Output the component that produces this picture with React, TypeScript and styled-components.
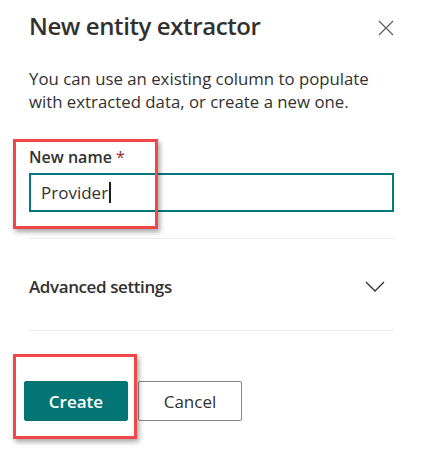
import React from "react";
import styled, { createGlobalStyle } from "styled-components";

const GlobalStyle = createGlobalStyle`
  body {
    margin: 0;
    background: #ffffff;
    font-family: "Open Sans", "Noto Sans", sans-serif;
    color: #323130;
  }
`;

const App: React.FC = () => {
  return (
    <>
      <GlobalStyle />
      <Panel>
        <Header>
          <Title>New entity extractor</Title>
          <CloseButton aria-label="Close">
            <svg width="16" height="16" viewBox="0 0 16 16">
              <path d="M1 1 L15 15 M15 1 L1 15" stroke="#605e5c" strokeWidth="1.2" fill="none" />
            </svg>
          </CloseButton>
        </Header>

        <Description>
          You can use an existing column to populate with extracted data, or create a new one.
        </Description>

        <Field>
          <Highlight $top={-7} $left={-16} $width={145} $height={90} />
          <Label>
            New name <Required>*</Required>
          </Label>
          <Input>
            Provider<Caret />
          </Input>
        </Field>

        <Divider />

        <Collapsible>
          <SectionTitle>Advanced settings</SectionTitle>
          <svg width="20" height="11" viewBox="0 0 20 11">
            <path d="M1 1 L10 10 L19 1" stroke="#323130" strokeWidth="1.3" fill="none" />
          </svg>
        </Collapsible>

        <Divider />

        <Footer>
          <Highlight $top={-27} $left={-11} $width={124} $height={85} />
          <Button $primary>Create</Button>
          <Button>Cancel</Button>
        </Footer>
      </Panel>
    </>
  );
};

export default App;

const Panel = styled.div`
  width: 421px;
  height: 460px;
  box-sizing: border-box;
  padding: 10px 27px 0 29px;
  background: #ffffff;
`;

const Header = styled.div`
  display: flex;
  justify-content: space-between;
  align-items: flex-start;
`;

const Title = styled.h1`
  margin: 0;
  font-size: 24px;
  line-height: 32px;
  font-weight: 600;
  letter-spacing: -0.4px;
  color: #323130;
`;

const CloseButton = styled.button`
  border: none;
  background: transparent;
  padding: 0;
  margin: 10px 0 0 0;
  width: 16px;
  height: 16px;
  display: flex;
`;

const Description = styled.p`
  margin: 25px 0 0 0;
  font-size: 16.8px;
  line-height: 23px;
  color: #323130;
`;

const Field = styled.div`
  position: relative;
  margin-top: 33px;
  padding-bottom: 26px;
`;

const Highlight = styled.div<{ $top: number; $left: number; $width: number; $height: number }>`
  position: absolute;
  top: ${(p) => p.$top}px;
  left: ${(p) => p.$left}px;
  width: ${(p) => p.$width}px;
  height: ${(p) => p.$height}px;
  box-sizing: border-box;
  border: 3px solid #f04848;
  box-shadow: 2px 3px 5px rgba(0, 0, 0, 0.35);
  pointer-events: none;
  z-index: 2;
`;

const Label = styled.div`
  font-size: 16px;
  line-height: 22px;
  font-weight: 600;
  color: #323130;
  margin-bottom: 5px;
`;

const Required = styled.span`
  color: #a4262c;
  font-weight: 400;
`;

const Input = styled.div`
  height: 39px;
  box-sizing: border-box;
  border: 2px solid #03787c;
  padding: 0 10px;
  display: flex;
  align-items: center;
  font-size: 17px;
  color: #323130;
`;

const Caret = styled.span`
  display: inline-block;
  width: 2px;
  height: 21px;
  background: #201f1e;
  margin-left: 1px;
`;

const Divider = styled.div`
  height: 1px;
  background: #edebe9;
`;

const Collapsible = styled.div`
  height: 91px;
  display: flex;
  align-items: center;
  justify-content: space-between;
  padding-right: 9px;
  padding-top: 4px;
  box-sizing: border-box;
`;

const SectionTitle = styled.div`
  font-size: 17px;
  font-weight: 600;
  letter-spacing: -0.4px;
  color: #323130;
`;

const Footer = styled.div`
  position: relative;
  display: flex;
  gap: 10px;
  margin-top: 50px;
  margin-left: -5px;
`;

const Button = styled.button<{ $primary?: boolean }>`
  width: 104px;
  height: 40px;
  border-radius: 2px;
  font-family: "Open Sans", "Noto Sans", sans-serif;
  font-size: 17px;
  font-weight: ${(p) => (p.$primary ? 600 : 400)};
  cursor: pointer;
  border: 1px solid ${(p) => (p.$primary ? "#037575" : "#8a8886")};
  background: ${(p) => (p.$primary ? "#037575" : "#ffffff")};
  color: ${(p) => (p.$primary ? "#ffffff" : "#323130")};
`;
